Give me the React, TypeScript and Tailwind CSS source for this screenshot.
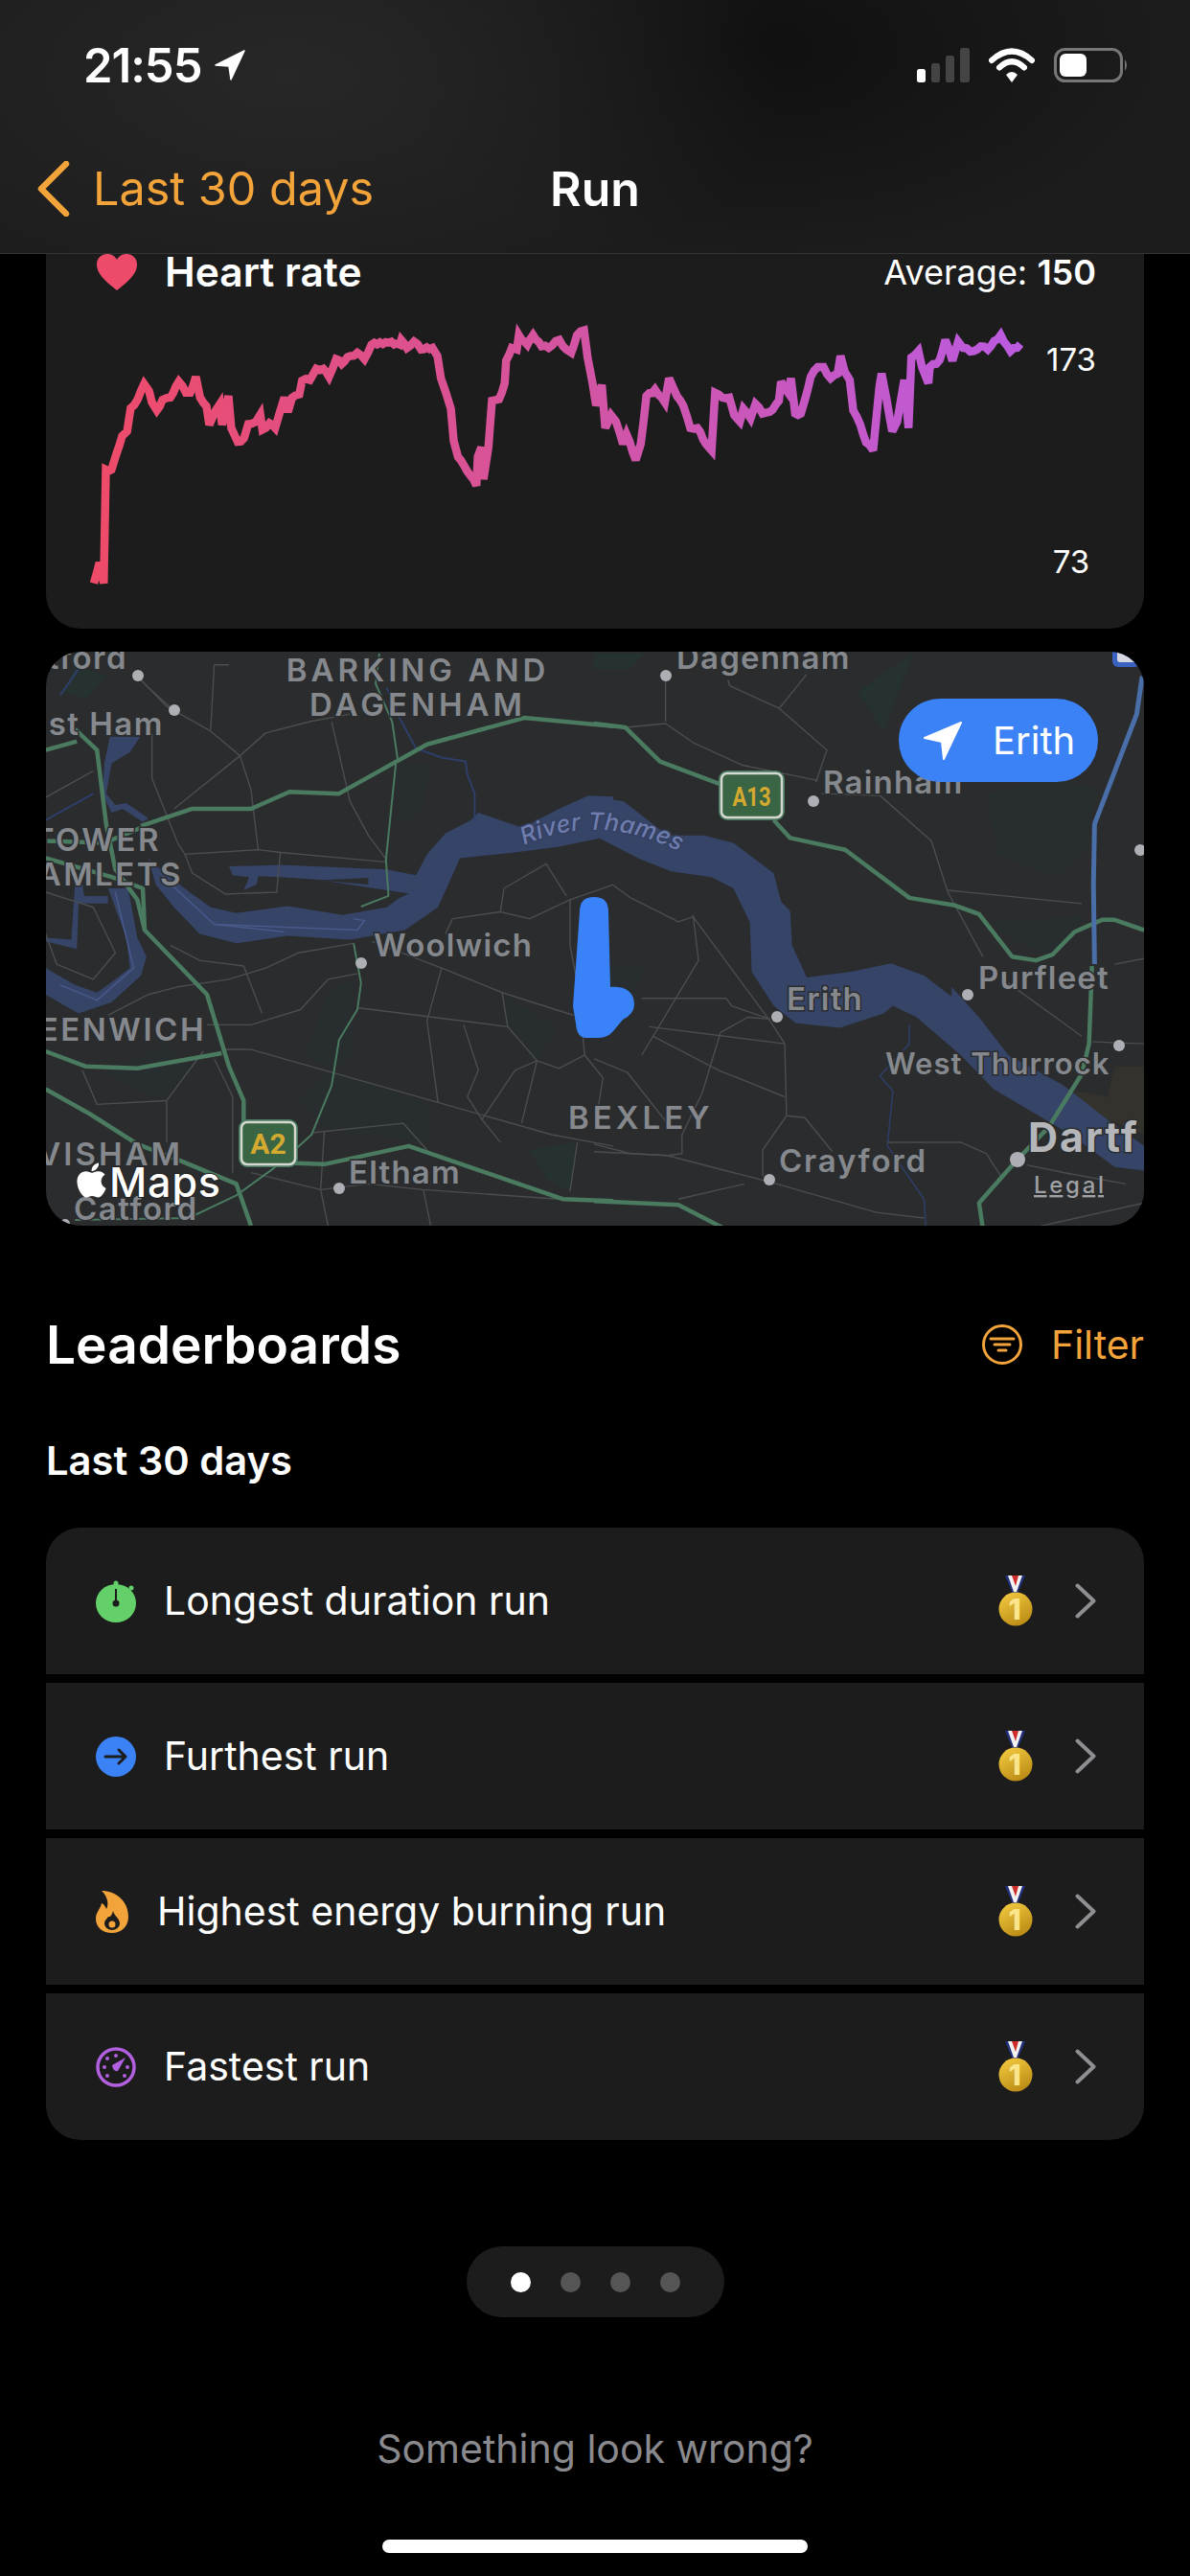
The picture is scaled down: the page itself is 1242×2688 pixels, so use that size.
import React from "react";

const chartRaw = "78,925 86,860 92,925 95,570 103,570 110,520 118,465 125,450 130,378 140,350 149,303 156,325 160,360 167,385 175,352 186,345 198,295 208,330 214,330 222,280 228,345 237,372 241,430 250,385 256,365 259,430 268,340 272,440 281,483 290,472 296,428 307,420 313,398 316,445 326,425 334,440 340,395 347,345 352,390 358,345 368,335 372,292 383,290 392,255 402,255 410,280 420,225 428,240 440,215 450,205 460,225 470,180 490,172 510,180 512,165 520,190 530,170 540,195 556,190 563,215 568,285 575,330 582,380 586,480 592,530 600,555 610,590 618,620 620,530 625,500 628,600 635,500 640,355 650,350 658,300 660,230 668,190 675,195 678,150 690,180 698,150 710,185 720,190 735,165 745,195 752,205 760,150 770,135 775,220 782,300 787,370 795,305 800,440 808,400 815,420 825,490 830,460 843,540 850,490 858,340 870,320 884,360 890,285 897,320 910,370 920,440 930,440 942,490 950,510 955,330 965,345 975,345 982,400 990,420 995,380 1005,410 1012,365 1022,395 1032,390 1045,355 1048,295 1058,330 1062,285 1068,395 1076,395 1082,350 1090,280 1100,250 1108,250 1118,285 1128,270 1132,215 1138,265 1145,290 1150,385 1160,430 1168,485 1178,510 1187,310 1190,270 1197,350 1205,450 1212,420 1222,290 1228,440 1232,220 1242,200 1247,250 1256,300 1258,250 1272,228 1280,165 1290,230 1298,170 1305,190 1320,200 1330,185 1340,195 1358,150 1372,200 1386,178";

// Thickens the sampled trace with small alternating offsets, like the per-second heart rate samples.
const chartPts = (() => {
  const p = chartRaw.split(" ").map((s) => s.split(",").map(Number));
  const out: string[] = [];
  for (let i = 0; i < p.length - 1; i++) {
    const [x0, y0] = p[i];
    const [x1, y1] = p[i + 1];
    const n = Math.max(1, Math.floor(Math.abs(x1 - x0) / 4));
    for (let k = 0; k < n; k++) {
      const t = k / n;
      const j = k === 0 ? 0 : ((i * 7 + k * 13) % 5 - 2) * 2.2;
      out.push(`${(x0 + (x1 - x0) * t).toFixed(1)},${(y0 + (y1 - y0) * t + j).toFixed(1)}`);
    }
  }
  out.push("1386,178");
  return out.join(" ");
})();

const leftGrey = [
  "20,410 150,340", "270,90 350,170 470,235 550,300 580,390 600,550", "550,300 620,240 740,210 850,190", "370,180 300,120 270,90",
  "370,440 550,300", "310,240 310,360 380,530 400,560 600,548 660,555 945,580", "400,560 420,610 510,665 650,660 660,555",
  "860,795 710,820 620,860 520,890 380,910 300,930 190,985", "1110,770 1130,730 1260,712 1340,730 1450,680 1568,640",
  "1260,712 1270,650 1385,585 1440,670", "1450,680 1450,800 1470,900 1490,1090 1540,1150 1520,1270", "910,790 1100,860 1265,925 1460,985",
  "1265,925 1280,1015 1360,1105 1318,1270", "1280,1015 870,965", "870,875 790,890 715,970 580,1010 460,1010", "500,1075 580,1075 1090,1215 1400,1300 1568,1330",
  "360,800 440,840 560,855 610,980", "745,1295 995,1270 1060,1340", "480,1100 530,1200 530,1400", "350,1210 350,1320", "120,1130 160,1220 350,1210 450,1080",
  "580,1400 770,1445 900,1430 1050,1445 1420,1470", "1360,1105 1420,1125 1490,1090", "1470,1320 1450,1450", "780,1290 770,1445 790,1540", "1050,1445 1070,1540",
  "480,60 470,230 480,60 520,60", "800,210 850,420 900,510 950,575", "20,660 150,700 210,820 150,890 50,850 20,770", "1100,860 1060,1000 1090,1215", "1160,1010 1200,1130 1170,1200 1210,1260 1260,1320", "1210,1260 1300,1130 1360,1105",
];
const leftGreen = [
  "20,285 105,262", "100,230 160,285 185,480 210,600 270,680 290,760 460,930 520,1120 560,1210 560,1265", "280,485 420,440 580,440 685,395 820,400 1060,270 1325,200 1568,222",
  "20,1080 130,1120 270,1125 500,1085", "20,1180 140,1245 270,1325 390,1370 540,1430 580,1540", "20,525 180,530 280,490", "20,570 200,620 285,650 290,760", "700,1375 780,1378 1010,1330 1430,1470 1568,1475",
];
const leftGreenThin = ["930,30 920,110 965,210 980,310", "975,320 948,575 955,670 880,698", "860,795 880,900 870,970 820,1050 800,1170 745,1300 700,1340 640,1390 540,1460 410,1520 100,1525"];
const rightGrey = [
  "195,90 195,210", "85,225 195,215 270,265 405,325 610,365", "365,100 370,115 505,175 635,285 605,370", "505,175 580,85", "620,400 780,405 920,525 965,660 1060,830",
  "965,655 1330,690", "50,640 100,675 230,738 270,725 480,1000 520,1060 525,1250 460,1340 460,1410", "130,940 360,940 375,960 480,995", "345,1030 420,990 480,995", "345,1030 295,1190 240,1300 240,1350 200,1355 100,1350 0,1325",
  "0,1345 200,1355 480,1425", "525,1250 575,1255 650,1345", "800,1320 1000,1320 1070,1350 1110,1410", "1130,900 1330,1040", "1360,1055 1500,1060", "1420,850 1500,835", "1180,1380 1280,1400 1450,1430",
  "480,1425 770,1505 900,1520", "0,1100 90,1135 200,1270", "150,1015 520,1060", "160,1040 340,1130 520,1200", "230,1470 410,1430", "1500,1480 1200,1545", "270,720 285,840 130,1090",
];
const rightGreen = ["0,215 85,225 180,315 345,375", "490,470 535,517 685,548 860,675 985,695 1050,718 1140,830 1205,840 1250,825 1310,765 1385,733 1420,733 1500,760", "1358,855 1350,1060 1330,1140 1240,1280 1150,1370 1050,1480 1060,1545", "0,1475 230,1485 350,1545"];

const Lines = ({ list, color, w }: { list: string[]; color: string; w: number }) => (
  <>
    {list.map((p) => (
      <polyline key={p} points={p} fill="none" stroke={color} strokeWidth={w} strokeLinejoin="round" vectorEffect="non-scaling-stroke" />
    ))}
  </>
);

const dots: [number, number, number][] = [[144, 705, 6], [182, 741, 6], [377, 1005, 6], [354, 1240, 6], [695, 705, 6], [849, 836, 6], [811, 1061, 6], [1010, 1038, 6], [1168, 1091, 6], [803, 1231, 6], [1062, 1210, 8], [1190, 887, 6], [68, 1277, 5]];

const labels: { t: string; x: number; y: number; a?: "start" | "middle" | "end"; ls?: number; s?: number }[] = [
  { t: "tford", x: 133, y: 698, a: "end", ls: 1.5 },
  { t: "st Ham", x: 171, y: 767, a: "end", ls: 1.5 },
  { t: "BARKING AND", x: 436, y: 711, a: "middle", ls: 4 },
  { t: "DAGENHAM", x: 436, y: 747, a: "middle", ls: 4 },
  { t: "TOWER", x: 168, y: 888, a: "end", ls: 2.5 },
  { t: "AMLETS", x: 191, y: 924, a: "end", ls: 2.5 },
  { t: "EENWICH", x: 215, y: 1086, a: "end", ls: 2.5 },
  { t: "VISHAM", x: 191, y: 1216, a: "end", ls: 3 },
  { t: "Catford", x: 77, y: 1273, ls: 1.5 },
  { t: "Woolwich", x: 390, y: 998, ls: 1.2 },
  { t: "Eltham", x: 364, y: 1235, ls: 1.2 },
  { t: "Dagenham", x: 706, y: 698, ls: 1.2 },
  { t: "Rainham", x: 859, y: 828, ls: 1.2 },
  { t: "Erith", x: 821, y: 1054, ls: 1.2 },
  { t: "Purfleet", x: 1021, y: 1032, ls: 1.2 },
  { t: "West Thurrock", x: 924, y: 1121, ls: 1, s: 31 },
  { t: "BEXLEY", x: 593, y: 1178, ls: 4 },
  { t: "Crayford", x: 813, y: 1223, ls: 1.8 },
];

const MapView = () => (
  <svg viewBox="48 680 1146 599" className="block w-full h-full">
    <defs>
      <path id="thames" d="M547 882 Q 625 846 712 890" />
    </defs>
    <rect x="48" y="680" width="1146" height="599" fill="#2a2c2e" />
    <g transform="translate(40 670) scale(0.3827 0.3954)">
      <g fill="#282e2f">
        <polygon points="100,60 185,90 130,150 70,130" fill="#263230" />
        <polygon points="790,920 860,890 860,1090 800,1130 730,1090" />
        <polygon points="1340,1340 1465,1320 1450,1450 1390,1420" fill="#263230" />
        <polygon points="180,1140 350,1060 420,1130 340,1210" />
        <polygon points="710,1210 800,1130 1070,1220 1060,1320 800,1290" />
        <polygon points="970,320 1070,320 1050,430 990,480" />
        <polygon points="1270,930 1415,1020 1360,1105 1280,1015" />
      </g>
      <g fill="#364468">
        <polygon points="1568,408 1500,405 1420,440 1320,490 1200,450 1180,470 1110,505 1060,560 1030,615 1020,660 985,675 950,700 830,720 680,697 540,715 470,700 420,665 345,610 300,570 320,640 370,700 440,770 540,795 680,775 850,785 1000,760 1090,700 1150,570 1300,555 1420,540 1568,510" />
        <polygon points="520,592 660,588 950,600 1030,615 1020,665 780,630 900,640 900,622 780,628 660,620 600,618 595,640 560,655 575,620 530,615" />
        <polygon points="190,650 245,650 270,780 295,830 280,880 200,950 110,980 100,975 20,930 20,860 100,905 160,925 210,890 250,860 240,780" />
        <polygon points="195,250 278,250 250,290 200,320 185,400 210,430 240,425 300,465 285,475 230,440 200,450 175,400 180,320" />
        <polygon points="100,640 120,640 125,670 190,670 190,690 110,690 105,810 20,790 20,780 90,785" />
      </g>
      <Lines list={["1190,470 1190,400 1170,350 1165,315 1100,305 1030,280 985,200 950,120", "60,140 110,70", "20,470 150,400"]} color="#2d3e68" w={2} />
      <Lines list={["340,620 480,745 870,760 890,735 860,730", "210,660 260,860 160,945 60,905", "480,745 670,765"]} color="#49598a" w={1.5} />
      <Lines list={leftGrey} color="#4b4d4f" w={1.4} />
      <Lines list={leftGreenThin} color="#4a7a60" w={2} />
      <Lines list={leftGreen} color="#4a7a60" w={4.5} />
    </g>
    <g transform="translate(620 670) scale(0.3827 0.3954)">
      <g fill="#282e2f">
        <polygon points="0,30 140,30 100,70 0,70" fill="#263230" />
        <polygon points="720,130 870,30 790,235" fill="#263230" />
        <polygon points="1070,400 1210,370 1370,380 1340,560 1250,620 1100,560" />
        <polygon points="1080,740 1340,720 1250,825 1150,790" />
        <polygon points="30,860 140,860 100,940 40,940" />
      </g>
      <polygon points="1230,1170 1400,1200 1420,1120 1500,1120 1500,1300 1400,1260" fill="#33322c" />
      <polygon points="0,410 80,420 200,510 300,510 380,530 490,610 510,685 535,710 540,800 580,885 700,870 810,848 900,880 975,935 975,910 1050,990 1090,1040 1130,1090 1280,1170 1400,1260 1500,1330 1500,1395 1420,1385 1300,1300 1090,1180 1000,1090 880,990 815,960 790,980 670,1018 550,1005 490,960 430,870 425,740 380,650 320,620 210,605 120,570 0,510" fill="#364468" />
      <Lines list={["860,1010 860,1060 780,1145 815,1185 800,1330 900,1470 905,1545"]} color="#2d3e68" w={1.5} />
      <Lines list={rightGrey} color="#4b4d4f" w={1.4} />
      <Lines list={rightGreen} color="#4a7a60" w={4.5} />
      <Lines list={["1495,90 1480,190 1365,480 1362,640 1365,850"]} color="#4a6ea8" w={5} />
    </g>
    <rect x="1161" y="674" width="29" height="22" rx="6" fill="#3a62c0" />
    <rect x="1166" y="674" width="19" height="17" rx="3" fill="#d5d8e0" />
    <g fontFamily="Inter, sans-serif" fontWeight="600" fontSize="33" fill="#85888d" stroke="#2a2c2e" strokeWidth="3" paintOrder="stroke">
      {labels.map((l) => (
        <text key={l.t} x={l.x} y={l.y} textAnchor={l.a ?? "start"} letterSpacing={l.ls} fontSize={l.s}>{l.t}</text>
      ))}
      <text x="1073" y="1202" fontSize="43" fontWeight="700" letterSpacing="2" fill="#b4b6b9">Dartf</text>
      <text fontSize="25" fontStyle="italic" fontWeight="500" fill="#6f7cae" stroke="#334060" letterSpacing="0.3">
        <textPath href="#thames">River Thames</textPath>
      </text>
    </g>
    {dots.map(([x, y, r]) => (
      <circle key={`${x}-${y}`} cx={x} cy={y} r={r} fill="#adafb4" />
    ))}
    <path d="M605 951Q605 936 620 936Q635 936 635 951L637 1030C648 1029 662 1032 662 1048Q662 1058 650 1064L640 1076Q634 1083 625 1083L612 1083Q602 1083 601 1068L598 1050Z" fill="#3a82f7" />
    <g>
      <rect x="249" y="1168" width="62" height="50" rx="9" fill="#4a7a60" />
      <rect x="252" y="1171" width="56" height="44" rx="6" fill="#3a6544" stroke="#d5d8d0" strokeWidth="2.5" />
      <text x="280" y="1204" textAnchor="middle" fontFamily="Roboto, sans-serif" fontWeight="700" fontSize="30" fill="#d4a92f">A2</text>
      <rect x="750" y="804" width="69" height="52" rx="9" fill="#4a7a60" />
      <rect x="753" y="807" width="63" height="46" rx="6" fill="#3a6544" stroke="#d5d8d0" strokeWidth="2.5" />
      <text x="784.5" y="841" textAnchor="middle" fontFamily="Roboto, sans-serif" fontWeight="700" fontSize="28" fill="#d4a92f" textLength="40" lengthAdjust="spacingAndGlyphs">A13</text>
    </g>
    <svg x="79" y="1211" width="33" height="41" viewBox="0 0 384 512" fill="#fff">
      <path d="M318.7 268.7c-.2-36.7 16.4-64.4 50-84.8-18.8-26.9-47.2-41.7-84.7-44.6-35.5-2.8-74.3 20.7-88.5 20.7-15 0-49.4-19.7-76.4-19.7C63.3 141.2 4 184.8 4 273.5q0 39.3 14.4 81.2c12.8 36.7 59 126.7 107.2 125.2 25.2-.6 43-17.9 75.8-17.9 31.8 0 48.3 17.9 76.4 17.9 48.6-.7 90.4-82.5 102.6-119.3-65.2-30.7-61.7-90-61.7-91.9zm-56.6-164.2c27.3-32.4 24.8-61.9 24-72.5-24.1 1.4-52 16.4-67.9 34.9-17.5 19.8-27.8 44.3-25.6 71.9 26.1 2 49.9-11.4 69.5-34.3z" />
    </svg>
    <text x="114" y="1249" fontFamily="Inter, sans-serif" fontSize="43" fontWeight="500" fill="#fff" stroke="#222" strokeWidth="2" paintOrder="stroke" textLength="116">Maps</text>
    <text x="1079" y="1245" fontFamily="Inter, sans-serif" fontSize="24" fontWeight="500" fill="#9fa1a4" textDecoration="underline" textLength="73">Legal</text>
  </svg>
);

const Medal = ({ id }: { id: string }) => (
  <svg width="36" height="54" viewBox="0 0 36 54" className="shrink-0">
    <defs>
      <linearGradient id={id} x1="0.2" y1="0" x2="0.7" y2="1">
        <stop offset="0" stopColor="#f2c93f" />
        <stop offset="1" stopColor="#b98a14" />
      </linearGradient>
    </defs>
    <polygon points="7,0 28,0 20,19 15,19" fill="#23307e" />
    <polygon points="10,0 25,0 19,17 16,17" fill="#f2f2f2" />
    <polygon points="14,0 21,0 18,11" fill="#cf2f2b" />
    <circle cx="18" cy="35" r="17.5" fill={`url(#${id})`} />
    <text x="17" y="46" textAnchor="middle" fontFamily="Inter, sans-serif" fontWeight="800" fontSize="30" fill="#fbe58c">1</text>
  </svg>
);

const Chevron = () => (
  <svg width="22" height="37" viewBox="0 0 22 37" className="shrink-0">
    <polyline points="2.5,2.5 19.5,18.5 2.5,34.5" fill="none" stroke="#8e8e93" strokeWidth="4" strokeLinecap="round" strokeLinejoin="round" />
  </svg>
);

const Stopwatch = () => (
  <svg width="42" height="44" viewBox="0 0 42 44" className="shrink-0">
    <circle cx="21" cy="3" r="2.5" fill="#63d06a" />
    <circle cx="37" cy="8" r="2.5" fill="#63d06a" />
    <ellipse cx="21" cy="24" rx="21" ry="20" fill="#63d06a" />
    <rect x="20" y="9" width="2" height="15" fill="#1c1c1c" />
    <circle cx="21" cy="24" r="3.5" fill="#1c1c1c" />
  </svg>
);
const Arrow = () => (
  <svg width="42" height="42" viewBox="0 0 42 42" className="shrink-0">
    <circle cx="21" cy="21" r="21" fill="#3b82f6" />
    <path d="M10 21H31M24 14L31 21L24 28" fill="none" stroke="#1c1c1c" strokeWidth="3" strokeLinecap="round" strokeLinejoin="round" />
  </svg>
);
const Flame = () => (
  <svg width="34" height="44" viewBox="0 0 34 44" className="shrink-0">
    <path d="M6 0C20 0 34 10 34 27C34 37 27 44 17 44C7 44 0 38 0 29C0 22 5 19 6 13C9 14 10 17 11 19C14 14 12 5 6 0Z" fill="#f2a33a" />
    <path d="M18 21C19 26 25 29 25 34C25 38 21 41 17 41C13 41 9 38 9 34C9 31 11 30 13 27C15 28 17 25 18 21Z" fill="#1c1c1c" />
    <circle cx="17" cy="35" r="3.5" fill="#f2a33a" />
  </svg>
);
const Gauge = () => (
  <svg width="42" height="42" viewBox="0 0 42 42" className="shrink-0">
    <circle cx="21" cy="21" r="19" fill="none" stroke="#b25fe0" strokeWidth="3.5" />
    <path d="M17 19L31 11L23 25Q18 26 17 19Z" fill="#b25fe0" />
    <g fill="#b25fe0">
      <circle cx="21" cy="9" r="2" /><circle cx="12" cy="12" r="2" /><circle cx="9" cy="21" r="2" /><circle cx="12" cy="30" r="2" /><circle cx="30" cy="30" r="2" /><circle cx="33" cy="21" r="2" />
    </g>
  </svg>
);

const rows = [
  { label: "Longest duration run", icon: <Stopwatch />, gap: "gap-[29px]", id: "gold1" },
  { label: "Furthest run", icon: <Arrow />, gap: "gap-[29px]", id: "gold2" },
  { label: "Highest energy burning run", icon: <Flame />, gap: "gap-[30px]", id: "gold3" },
  { label: "Fastest run", icon: <Gauge />, gap: "gap-[29px]", id: "gold4" },
];

export default function App() {
  return (
    <div className="w-[1242px] h-[2688px] bg-black overflow-hidden flex flex-col text-white [font-family:Inter,'Liberation_Sans',sans-serif]">
      {/* Header */}
      <header className="h-[265px] shrink-0 flex flex-col border-b border-[#353535] bg-[#1c1c1c] bg-[radial-gradient(ellipse_520px_260px_at_300px_80px,#272727,transparent),radial-gradient(ellipse_420px_220px_at_800px_50px,#101010,transparent)]">
        <div className="h-[136px] shrink-0 flex items-center justify-between pl-[87px] pr-[64px]">
          <div className="flex items-center gap-[13px]">
            <span className="text-[49px] font-semibold leading-none tracking-[-1px]">21:55</span>
            <svg width="32" height="32" viewBox="0 0 32 32">
              <path d="M31 1L1 16L15 17L17 31Z" fill="#fff" stroke="#fff" strokeWidth="1.5" strokeLinejoin="round" />
            </svg>
          </div>
          <div className="flex items-end h-[36px]">
            <svg width="56" height="36" viewBox="0 0 56 36" className="mr-[19px]">
              <rect x="0" y="22" width="9" height="14" rx="2.5" fill="#fff" />
              <rect x="15" y="16" width="9" height="20" rx="2.5" fill="#444" />
              <rect x="30" y="8" width="9" height="28" rx="2.5" fill="#444" />
              <rect x="45" y="0" width="10" height="36" rx="2.5" fill="#444" />
            </svg>
            <svg width="48" height="36" viewBox="0 0 48 36" className="mr-[20px]">
              <path d="M3 13Q24 -6 45 13" fill="none" stroke="#fff" strokeWidth="6" strokeLinecap="round" />
              <path d="M11 20.5Q24 8 37 20.5" fill="none" stroke="#fff" strokeWidth="6" strokeLinecap="round" />
              <path d="M18 28L24 36L30 28Q24 22 18 28Z" fill="#fff" />
            </svg>
            <svg width="78" height="36" viewBox="0 0 78 36">
              <rect x="1.5" y="1.5" width="69" height="33" rx="10" fill="none" stroke="#777" strokeWidth="3" />
              <rect x="6" y="6" width="28" height="24" rx="6" fill="#fff" />
              <path d="M74 12Q78 18 74 24Z" fill="#777" />
            </svg>
          </div>
        </div>
        <div className="relative h-[122px] shrink-0 flex items-center justify-center">
          <div className="absolute left-[39px] top-1/2 -translate-y-1/2 flex items-center gap-[24px]">
            <svg width="34" height="58" viewBox="0 0 34 58">
              <polyline points="30,3 4,29 30,55" fill="none" stroke="#f2a33a" strokeWidth="6.5" strokeLinecap="round" strokeLinejoin="round" />
            </svg>
            <span className="text-[48.5px] leading-none text-[#f2a33a]">Last 30 days</span>
          </div>
          <span className="text-[50px] font-semibold leading-none">Run</span>
        </div>
      </header>

      {/* Heart rate card */}
      <section className="mx-[48px] h-[391px] shrink-0 bg-[#1c1c1c] rounded-b-[36px]">
        <div className="h-[38px] flex items-center justify-between pl-[53px] pr-[50px]">
          <div className="flex items-center gap-[29px]">
            <svg width="42" height="38" viewBox="0 0 42 38">
              <path d="M21 38C7 27 0 20 0 11C0 4 5 0 11 0C15 0 19 2 21 6C23 2 27 0 31 0C37 0 42 4 42 11C42 20 35 27 21 38Z" fill="#ee4b6a" />
            </svg>
            <span className="text-[42.5px] font-semibold leading-none">Heart rate</span>
          </div>
          <span className="text-[36px] leading-none">Average: <span className="font-semibold">150</span></span>
        </div>
        <div className="flex ml-[44px] mt-[40px]">
          <svg width="976" height="269" viewBox="70 130 1320 805" preserveAspectRatio="none" className="overflow-visible shrink-0">
            <defs>
              <linearGradient id="hr" gradientUnits="userSpaceOnUse" x1="70" y1="0" x2="1390" y2="0">
                <stop offset="0" stopColor="#ef4b68" />
                <stop offset="0.5" stopColor="#d454a0" />
                <stop offset="1" stopColor="#bb5be0" />
              </linearGradient>
            </defs>
            <polyline points={chartPts} fill="none" stroke="url(#hr)" strokeWidth="8.5" strokeLinejoin="miter" strokeMiterlimit="3" vectorEffect="non-scaling-stroke" />
          </svg>
          <div className="w-[80px] ml-[10px] mt-[12px] h-[251px] flex flex-col justify-between items-center text-[33px] leading-[40px]">
            <span>173</span>
            <span>73</span>
          </div>
        </div>
      </section>

      {/* Map */}
      <section className="relative mx-[48px] mt-[24px] h-[599px] shrink-0 rounded-[36px] overflow-hidden">
        <MapView />
        <div className="absolute left-[890px] top-[49px] w-[208px] h-[87px] rounded-full bg-[#3b82f6] flex items-center pl-[26px] gap-[32px]">
          <svg width="40" height="40" viewBox="0 0 40 40">
            <path d="M39 1L1 17L19 21L21 39Z" fill="#fff" stroke="#fff" strokeWidth="2" strokeLinejoin="round" />
          </svg>
          <span className="text-[40px] leading-none">Erith</span>
        </div>
      </section>

      {/* Leaderboards */}
      <div className="mx-[48px] mt-[94px] h-[60px] flex items-center justify-between shrink-0">
        <h2 className="text-[55px] font-semibold leading-none">Leaderboards</h2>
        <div className="flex items-center gap-[30px] text-[#f2a33a]">
          <svg width="42" height="42" viewBox="0 0 42 42">
            <circle cx="21" cy="21" r="19.5" fill="none" stroke="#f2a33a" strokeWidth="3" />
            <path d="M9 15H33M13 21H29M17 27H25" stroke="#f2a33a" strokeWidth="3" strokeLinecap="round" />
          </svg>
          <span className="text-[41px] leading-none">Filter</span>
        </div>
      </div>
      <div className="mx-[48px] mt-[69px] h-[44px] flex items-center shrink-0 text-[41.7px] font-semibold">Last 30 days</div>

      <div className="mx-[48px] mt-[48px] flex flex-col gap-[9px] shrink-0 rounded-[36px] overflow-hidden">
        {rows.map((r) => (
          <div key={r.label} className="h-[153px] bg-[#1c1c1c] flex items-center pl-[52px] pr-[50px]">
            <div className={`flex items-center ${r.gap}`}>
              {r.icon}
              <span className="text-[41px] leading-none">{r.label}</span>
            </div>
            <div className="ml-auto flex items-center gap-[44px]">
              <Medal id={r.id} />
              <Chevron />
            </div>
          </div>
        ))}
      </div>

      <div className="self-center mt-[111px] w-[269px] h-[74px] rounded-full bg-[#1c1c1c] flex items-center justify-center gap-[31px] shrink-0">
        <span className="w-[21px] h-[21px] rounded-full bg-white" />
        <span className="w-[21px] h-[21px] rounded-full bg-[#555]" />
        <span className="w-[21px] h-[21px] rounded-full bg-[#555]" />
        <span className="w-[21px] h-[21px] rounded-full bg-[#555]" />
      </div>

      <div className="self-center mt-[113px] h-[50px] flex items-center text-[41px] text-[#8a8a8e] shrink-0">Something look wrong?</div>
      <div className="self-center mt-[69px] w-[444px] h-[14px] rounded-full bg-white shrink-0" />
    </div>
  );
}
